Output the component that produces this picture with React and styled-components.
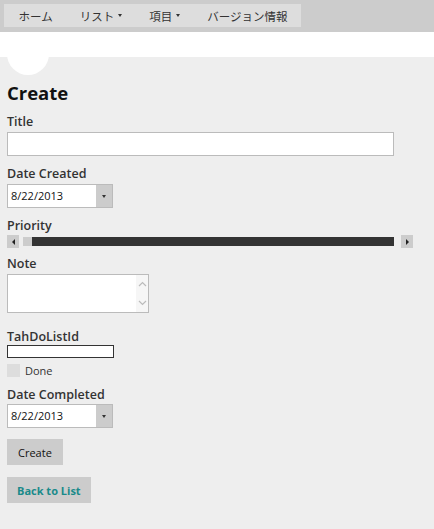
import React from "react";
import styled, { createGlobalStyle } from "styled-components";

const GlobalStyle = createGlobalStyle`
  html, body {
    margin: 0;
    padding: 0;
    background: #eeeeee;
  }
  body {
    font-family: "Open Sans", "Noto Sans CJK JP", sans-serif;
    color: #333333;
  }
`;

const TopBar = styled.div`
  height: 32px;
  background: #cccccc;
  padding: 4px 0 0 4px;
  box-sizing: border-box;
`;

const Menu = styled.ul`
  display: flex;
  width: 297px;
  height: 23px;
  margin: 0;
  padding: 0 0 0 1px;
  box-sizing: border-box;
  list-style: none;
  background: #dddddd;
`;

const MenuItem = styled.li`
  display: flex;
  flex-shrink: 0;
  align-items: center;
  gap: 4px;
  padding: 0 13.5px;
  white-space: nowrap;
  font-family: "Noto Sans CJK JP", sans-serif;
  font-size: 11.5px;
  color: #333333;
`;

const Caret = styled.span`
  width: 0;
  height: 0;
  border-left: 2.5px solid transparent;
  border-right: 2.5px solid transparent;
  border-top: 3px solid #333333;
`;

const Banner = styled.div`
  position: relative;
  height: 25px;
  background: #ffffff;
`;

const Logo = styled.div`
  position: absolute;
  left: 7px;
  top: 1px;
  width: 42px;
  height: 42px;
  border-radius: 50%;
  background: #ffffff;
`;

const Main = styled.main`
  display: flex;
  flex-direction: column;
  align-items: flex-start;
  padding: 0 7px 30px;
`;

const Heading = styled.h1`
  margin: 24px 0 0;
  font-size: 18.5px;
  line-height: 24px;
  font-weight: 700;
  color: #111111;
`;

const Label = styled.label`
  display: block;
  margin-top: ${(p) => p.$top + 2}px;
  margin-bottom: ${(p) => p.$bottom - 2}px;
  font-size: 12.5px;
  line-height: 16px;
  font-weight: 600;
  color: #333333;
`;

const TextBox = styled.div`
  box-sizing: border-box;
  width: ${(p) => p.$w}px;
  height: ${(p) => p.$h}px;
  background: #ffffff;
  border: 1px solid ${(p) => p.$border || "#bbbbbb"};
`;

const Select = styled.div`
  box-sizing: border-box;
  display: flex;
  width: 106px;
  height: 24px;
  background: #ffffff;
  border: 1px solid #bbbbbb;
`;

const SelectValue = styled.span`
  flex: 1;
  padding-left: 3px;
  font-size: 11px;
  line-height: 22px;
  color: #111111;
`;

const SelectButton = styled.span`
  display: flex;
  align-items: center;
  justify-content: center;
  width: 16px;
  background: #cccccc;
`;

const Slider = styled.div`
  display: flex;
  align-items: center;
  width: 406px;
  height: 13px;
  margin-top: 3px;
`;

const ArrowButton = styled.span`
  display: flex;
  align-items: center;
  justify-content: center;
  width: 12px;
  height: 13px;
  background: #cccccc;
`;

const Arrow = styled.span`
  width: 0;
  height: 0;
  border-top: 3px solid transparent;
  border-bottom: 3px solid transparent;
  ${(p) =>
    p.$dir === "left"
      ? "border-right: 3px solid #222222;"
      : "border-left: 3px solid #222222;"}
`;

const Track = styled.div`
  flex: 1;
  display: flex;
  height: 9px;
  margin: 0 7px 0 4px;
`;

const Thumb = styled.span`
  width: 9px;
  background: #cccccc;
`;

const Fill = styled.span`
  flex: 1;
  background: #333333;
`;

const TextArea = styled.div`
  box-sizing: border-box;
  display: flex;
  justify-content: flex-end;
  width: 142px;
  height: 39px;
  background: #ffffff;
  border: 1px solid #bbbbbb;
`;

const ScrollBar = styled.div`
  display: flex;
  flex-direction: column;
  justify-content: space-around;
  align-items: center;
  width: 12px;
  background: #f6f6f6;
`;

const CheckRow = styled.div`
  display: flex;
  align-items: center;
  gap: 5px;
  margin-top: 5px;
  font-size: 11px;
  color: #333333;
`;

const CheckBox = styled.span`
  width: 13px;
  height: 13px;
  background: #dddddd;
`;

const Button = styled.button`
  margin-top: ${(p) => p.$top}px;
  height: 26px;
  padding: 0 ${(p) => p.$pad}px;
  border: none;
  background: #cccccc;
  font-family: "Open Sans", sans-serif;
  font-size: 11px;
  font-weight: ${(p) => (p.$link ? 700 : 400)};
  color: ${(p) => (p.$link ? "#1a8a8a" : "#111111")};
`;

const Chevron = ({ up }) => (
  <svg width="9" height="6" viewBox="0 0 9 6">
    <path
      d={up ? "M1 5 L4.5 1.5 L8 5" : "M1 1 L4.5 4.5 L8 1"}
      fill="none"
      stroke="#bbbbbb"
      strokeWidth="1.2"
    />
  </svg>
);

const DateSelect = ({ value }) => (
  <Select>
    <SelectValue>{value}</SelectValue>
    <SelectButton>
      <Caret />
    </SelectButton>
  </Select>
);

const App = () => {
  return (
    <>
      <GlobalStyle />
      <TopBar>
        <Menu>
          <MenuItem>ホーム</MenuItem>
          <MenuItem>
            リスト
            <Caret />
          </MenuItem>
          <MenuItem>
            項目
            <Caret />
          </MenuItem>
          <MenuItem>バージョン情報</MenuItem>
        </Menu>
      </TopBar>
      <Banner>
        <Logo />
      </Banner>
      <Main>
        <Heading>Create</Heading>
        <Label $top={7} $bottom={4}>Title</Label>
        <TextBox $w={387} $h={24} />
        <Label $top={8} $bottom={4}>Date Created</Label>
        <DateSelect value="8/22/2013" />
        <Label $top={8} $bottom={0}>Priority</Label>
        <Slider>
          <ArrowButton>
            <Arrow $dir="left" />
          </ArrowButton>
          <Track>
            <Thumb />
            <Fill />
          </Track>
          <ArrowButton>
            <Arrow $dir="right" />
          </ArrowButton>
        </Slider>
        <Label $top={6} $bottom={4}>Note</Label>
        <TextArea>
          <ScrollBar>
            <Chevron up />
            <Chevron />
          </ScrollBar>
        </TextArea>
        <Label $top={14} $bottom={2}>TahDoListId</Label>
        <TextBox $w={107} $h={13} $border="#333333" />
        <CheckRow>
          <CheckBox />
          Done
        </CheckRow>
        <Label $top={7} $bottom={3}>Date Completed</Label>
        <DateSelect value="8/22/2013" />
        <Button $top={11} $pad={11}>Create</Button>
        <Button $top={12} $pad={10} $link>
          Back to List
        </Button>
      </Main>
    </>
  );
};

export default App;
